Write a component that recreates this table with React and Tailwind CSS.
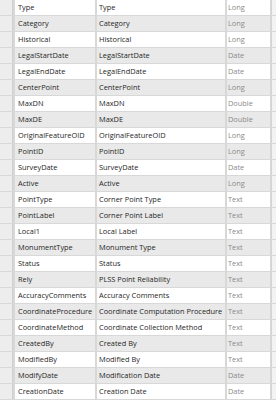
import React from 'react';

const fields = [
    ['Type', 'Type', 'Long'],
    ['Category', 'Category', 'Long'],
    ['Historical', 'Historical', 'Long'],
    ['LegalStartDate', 'LegalStartDate', 'Date'],
    ['LegalEndDate', 'LegalEndDate', 'Date'],
    ['CenterPoint', 'CenterPoint', 'Long'],
    ['MaxDN', 'MaxDN', 'Double'],
    ['MaxDE', 'MaxDE', 'Double'],
    ['OriginalFeatureOID', 'OriginalFeatureOID', 'Long'],
    ['PointID', 'PointID', 'Long'],
    ['SurveyDate', 'SurveyDate', 'Date'],
    ['Active', 'Active', 'Long'],
    ['PointType', 'Corner Point Type', 'Text'],
    ['PointLabel', 'Corner Point Label', 'Text'],
    ['Local1', 'Local Label', 'Text'],
    ['MonumentType', 'Monument Type', 'Text'],
    ['Status', 'Status', 'Text'],
    ['Rely', 'PLSS Point Reliability', 'Text'],
    ['AccuracyComments', 'Accuracy Comments', 'Text'],
    ['CoordinateProcedure', 'Coordinate Computation Procedure', 'Text'],
    ['CoordinateMethod', 'Coordinate Collection Method', 'Text'],
    ['CreatedBy', 'Created By', 'Text'],
    ['ModifiedBy', 'Modified By', 'Text'],
    ['ModifyDate', 'Modification Date', 'Date'],
    ['CreationDate', 'Creation Date', 'Date'],
];

const FieldRow = ({ name, alias, type, shaded }) => {
    const cell = shaded ? 'bg-[#e9e9e9]' : 'bg-white';
    return (
        <div className="flex h-[15px] shrink-0 gap-[2px]">
            {/* row header gutter */}
            <div className="w-[13px] shrink-0 bg-[#ededed] border-r border-[#cfcfcf]" />
            <div className={`w-[80px] shrink-0 pl-[3px] overflow-hidden whitespace-nowrap text-[#262626] ${cell}`}>
                {name}
            </div>
            <div className={`w-[128px] shrink-0 pl-[2px] overflow-hidden whitespace-nowrap text-[#262626] ${cell}`}>
                {alias}
            </div>
            <div className={`w-[43px] shrink-0 pl-[1px] overflow-hidden whitespace-nowrap text-[#8a8a8a] ${cell}`}>
                {type}
            </div>
            <div className="flex-1 bg-[#f3f3f3] border-l border-[#d4d4d4] -ml-[1px]" />
        </div>
    );
};

export default function App() {
    return (
        <div className="w-[276px] h-[400px] overflow-hidden bg-[#d8d8d8] flex flex-col gap-px font-['Open_Sans',sans-serif] text-[7.4px] leading-[15px]">
            {fields.map(([name, alias, type], i) => (
                <FieldRow key={name} name={name} alias={alias} type={type} shaded={i % 2 === 1} />
            ))}
        </div>
    );
}
